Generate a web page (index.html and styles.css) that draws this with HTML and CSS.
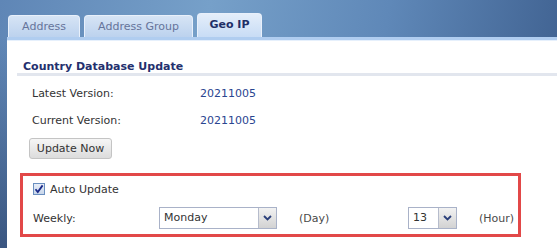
FILE: index.html
```html
<!DOCTYPE html>
<html>
<head>
  <meta charset="UTF-8">
  <title>Geo IP</title>
  <link rel="stylesheet" href="styles.css">
</head>
<body>
  <div class="tabs">
    <div class="tab tab-address">Address</div>
    <div class="tab tab-group">Address Group</div>
    <div class="tab tab-active">Geo IP</div>
  </div>

  <div class="panel">
    <h2 class="section-title">Country Database Update</h2>

    <div class="versions">
      <div class="row">
        <span class="label">Latest Version:</span>
        <span class="value">20211005</span>
      </div>
      <div class="row">
        <span class="label">Current Version:</span>
        <span class="value">20211005</span>
      </div>
    </div>

    <button class="btn">Update Now</button>

    <div class="auto-box">
      <label class="check"><span class="checkbox"><svg width="10" height="10" viewBox="0 0 10 10"><path d="M1.5 5.2 L3.8 8 L8.6 1.4" fill="none" stroke="#1a2a8a" stroke-width="1.8"/></svg></span> Auto Update</label>
      <div class="sched">
        <span class="sched-label">Weekly:</span>
        <div class="combo combo-day">
          <span class="combo-text">Monday</span>
          <span class="combo-arrow"><svg width="9" height="6" viewBox="0 0 9 6"><path d="M1 1 L4.5 4.5 L8 1" fill="none" stroke="#2a3f7a" stroke-width="1.8"/></svg></span>
        </div>
        <span class="unit unit-day">(Day)</span>
        <div class="combo combo-hour">
          <span class="combo-text">13</span>
          <span class="combo-arrow"><svg width="9" height="6" viewBox="0 0 9 6"><path d="M1 1 L4.5 4.5 L8 1" fill="none" stroke="#2a3f7a" stroke-width="1.8"/></svg></span>
        </div>
        <span class="unit">(Hour)</span>
      </div>
    </div>
  </div>
</body>
</html>
```

FILE: styles.css
```css
* { box-sizing: border-box; }

body {
  margin: 0;
  width: 557px;
  height: 248px;
  overflow: hidden;
  font-family: "DejaVu Sans", sans-serif;
  font-size: 11px;
  color: #333;
  background:
    linear-gradient(180deg, rgba(30, 50, 90, 0) 15%, rgba(30, 50, 90, 0.6) 100%),
    linear-gradient(100deg, #5f86b6 0%, #76a0c9 35%, #5f88b8 65%, #3c5d8c 100%);
}

.tabs { display: flex; align-items: flex-end; height: 37px; padding-left: 8px; gap: 4px; }
.tab {
  height: 22px;
  line-height: 22px;
  text-align: center;
  color: #66749a;
  border: 1px solid #e8f0fb;
  border-bottom: none;
  border-radius: 4px 4px 0 0;
  background: linear-gradient(#d6e4f5, #bcd2ee);
}
.tab-address { width: 72px; }
.tab-group { width: 109px; }
.tab-active {
  width: 65px;
  height: 24px;
  line-height: 22px;
  color: #1f2f66;
  font-weight: bold;
  background: linear-gradient(#e4eefa, #c8dcf5);
}

.panel {
  margin-left: 7px;
  height: 211px;
  background: #fff;
  border-top: 3px solid #b0cdf0;
  box-shadow: inset 0 1px 0 #e6f0fc;
  padding: 20px 0 0 10px;
}

.section-title {
  margin: 0;
  padding: 0 0 0 6px;
  height: 16px;
  line-height: 13px;
  font-size: 11px;
  font-weight: bold;
  color: #24306e;
  border-bottom: 3px solid #e2e6ee;
}

.versions { margin-top: 4px; }
.row { display: flex; height: 27px; align-items: center; padding-left: 15px; }
.label { width: 168px; }
.value { color: #2a4590; }

.btn {
  display: block;
  margin: 4px 0 0 12px;
  height: 21px;
  width: 83px;
  font: inherit;
  color: #333;
  border: 1px solid #c4c4c4;
  border-radius: 3px;
  background: linear-gradient(#f6f6f6, #dcdcdc);
  padding: 0;
}

.auto-box {
  margin: 14px 0 0 3px;
  width: 501px;
  height: 64px;
  border: 3px solid #e24848;
  padding: 0 0 0 10px;
}

.check { display: flex; align-items: center; height: 26px; gap: 5px; }
.checkbox {
  width: 12px;
  height: 12px;
  border: 1px solid #6a8fbf;
  background: linear-gradient(#e8eef8, #c8d6ea);
  display: flex;
  align-items: center;
  justify-content: center;
}

.sched { display: flex; align-items: center; height: 32px; }
.sched-label { width: 126px; }
.combo {
  display: flex;
  height: 22px;
  border: 1px solid #a9b2c8;
  background: #fff;
}
.combo-text { flex: 1; padding-left: 4px; line-height: 20px; }
.combo-arrow {
  width: 18px;
  border-left: 1px solid #b6bccc;
  background: linear-gradient(#f2f2f2, #d2d2d2);
  display: flex;
  align-items: center;
  justify-content: center;
}
.combo-day { width: 118px; }
.combo-hour { width: 49px; }
.unit { color: #4a4a4a; margin-left: 22px; }
.unit-day { width: 109px; }
```
